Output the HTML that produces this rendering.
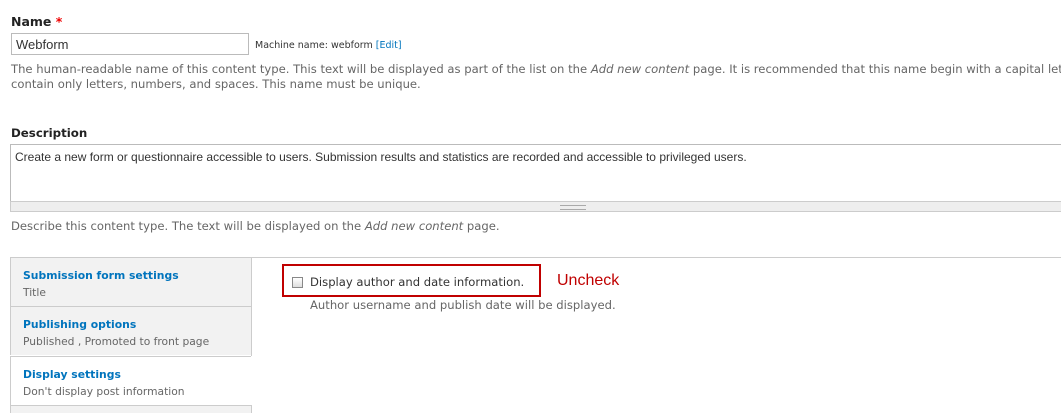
<!DOCTYPE html>
<html style="overflow:hidden;height:413px"><head><style>
body{margin:0;width:1061px;height:413px;overflow:hidden;background:#fff;font-family:"DejaVu Sans",Verdana,sans-serif;color:#3b3b3b;position:relative}
.a{position:absolute;white-space:nowrap}
.lbl{font-weight:bold;font-size:12.5px;color:#222}
.help{font-size:11.6px;color:#666;line-height:15px}
a{color:#0074bd;text-decoration:none}
.tab{position:absolute;left:10px;width:241px;border-top:1px solid #ccc;border-left:1px solid #ccc;background:#f2f2f2;height:49px;box-sizing:border-box;padding:9px 0 0 12px;font-size:10.7px;color:#666;line-height:17px}
.tab b{color:#0074bd;display:block;font-size:10.8px}
</style></head><body>
<div class="a lbl" style="left:11px;top:14px">Name <span style="color:#e00">*</span></div>
<div class="a" style="left:11px;top:33px;width:238px;height:22px;border:1px solid #bbb;box-sizing:border-box;font-family:'Liberation Sans',Arial,sans-serif;font-size:13px;padding:3px 4px;color:#333">Webform</div>
<div class="a" style="left:255px;top:40px;font-size:9.5px;color:#333">Machine name: webform <a>[Edit]</a></div>
<div class="a help" style="left:11px;top:62px">The human-readable name of this content type. This text will be displayed as part of the list on the <i>Add new content</i> page. It is recommended that this name begin with a capital letter and<br>contain only letters, numbers, and spaces. This name must be unique.</div>
<div class="a lbl" style="left:11px;top:126px;font-size:11.8px">Description</div>
<div class="a" style="left:10px;top:144px;width:1060px;height:58px;border:1px solid #bbb;box-sizing:border-box;font-family:'Liberation Sans',Arial,sans-serif;font-size:12px;padding:5px 4px;color:#333">Create a new form or questionnaire accessible to users. Submission results and statistics are recorded and accessible to privileged users.</div>
<div class="a" style="left:10px;top:201px;width:1060px;height:11px;background:#eee;border:1px solid #ccc;box-sizing:border-box"><div style="position:absolute;left:549px;top:3px;width:26px;height:3px;border-top:1px solid #aaa;border-bottom:1px solid #aaa"></div></div>
<div class="a help" style="left:11px;top:219px">Describe this content type. The text will be displayed on the <i>Add new content</i> page.</div>
<div class="a" style="left:10px;top:257px;width:1061px;border-top:1px solid #ccc"></div>
<div class="tab" style="top:257px"><b>Submission form settings</b>Title</div>
<div class="tab" style="top:306px"><b>Publishing options</b>Published , Promoted to front page</div>
<div class="tab" style="top:356px;background:#fff"><b>Display settings</b>Don't display post information</div>
<div class="tab" style="top:405px;height:8px"></div>
<div class="a" style="left:251px;top:257px;height:49px;border-left:1px solid #ccc"></div>
<div class="a" style="left:251px;top:306px;height:50px;border-left:1px solid #ccc"></div>
<div class="a" style="left:251px;top:405px;height:8px;border-left:1px solid #ccc"></div>
<div class="a" style="left:282px;top:264px;width:259px;height:33px;border:2px solid #c00000;box-sizing:border-box"></div>
<div class="a" style="left:292px;top:277px;width:11px;height:11px;border:1px solid #888;background:linear-gradient(#fff,#ddd);box-sizing:border-box"></div>
<div class="a" style="left:310px;top:275px;font-size:11.6px;color:#333">Display author and date information.</div>
<div class="a" style="left:557px;top:272px;font-family:'Liberation Sans',Arial,sans-serif;font-size:16px;color:#c00000">Uncheck</div>
<div class="a help" style="left:310px;top:298px">Author username and publish date will be displayed.</div>
</body></html>
